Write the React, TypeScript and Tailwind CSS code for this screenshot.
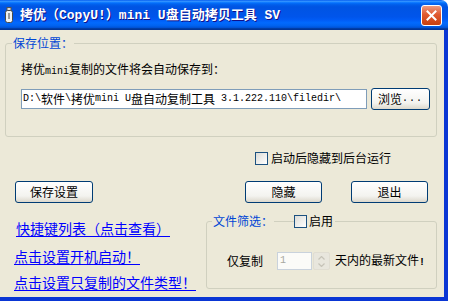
import type { ReactNode } from 'react'

const CJK = "font-['Noto_Sans_CJK_SC',sans-serif]"

// SimSun-like look: ascii runs in a narrow mono face, the rest in the CJK face
function Mixed({ text, latin }: { text: string; latin: string }) {
  const parts = text.split(/([\x20-\x7e]+)/).filter(Boolean)
  return (
    <>
      {parts.map((p, i) =>
        /^[\x20-\x7e]+$/.test(p) ? (
          <span key={i} className={latin}>{p}</span>
        ) : (
          <span key={i}>{p}</span>
        )
      )}
    </>
  )
}

function Check() {
  return (
    <span className="inline-block w-[13px] h-[13px] border border-[#1c5180] bg-[linear-gradient(135deg,#dcdcd7,#ffffff)] shrink-0" />
  )
}

function XpButton({ children, className }: { children: ReactNode; className?: string }) {
  return (
    <button className={`h-[22px] rounded-[3px] border border-[#003c74] bg-[linear-gradient(to_bottom,#ffffff,#f3f3ef_70%,#dcd8cc)] text-[12px] leading-[14px] text-black flex items-center justify-center ${className ?? ''}`}>
      {children}
    </button>
  )
}

function UsbIcon() {
  return (
    <svg width="8" height="16" viewBox="0 0 8 16">
      <rect x="2" y="0.5" width="4" height="3" fill="#d8d8d8" stroke="#555" strokeWidth="1" />
      <rect x="0.5" y="3.5" width="7" height="12" rx="2" fill="#f2f2f2" stroke="#4a4a4a" strokeWidth="1" />
      <rect x="3" y="6" width="2" height="6" fill="#9a9a9a" />
    </svg>
  )
}

export default function App() {
  return (
    <div className={`w-[461px] h-[308px] bg-white ${CJK}`}>
      <div className="w-[448px] h-[301px] flex flex-col">
        {/* title bar */}
        <div className="h-[30px] shrink-0 flex items-center rounded-tr-[7px] bg-[linear-gradient(to_bottom,#0058ee_0%,#3593ff_4%,#288eff_6%,#127dff_8%,#036ffc_10%,#0262ee_14%,#0057e5_20%,#0054e3_24%,#0055eb_56%,#005bf5_66%,#026afe_76%,#0062ef_86%,#0052d6_92%,#0040ab_94%,#003092_100%)] pl-[5px] pr-[6px]">
          <UsbIcon />
          <span className="ml-[7px] text-white font-bold text-[13px] leading-[16px] whitespace-pre [text-shadow:1px_1px_#0f1089]">
            <Mixed text="拷优（CopyU!）mini U盘自动拷贝工具 SV" latin="font-['Liberation_Mono'] text-[13px]" />
          </span>
          <div className="ml-auto w-[21px] h-[21px] rounded-[3px] border border-white bg-[linear-gradient(to_bottom,#ec9a80,#e0592f_45%,#c8400f)] flex items-center justify-center">
            <svg width="11" height="11" viewBox="0 0 11 11">
              <path d="M1.5 1.5 L9.5 9.5 M9.5 1.5 L1.5 9.5" stroke="white" strokeWidth="2" strokeLinecap="square" />
            </svg>
          </div>
        </div>

        {/* body */}
        <div className="flex-1 bg-[#ece9d8] border-r-4 border-b-4 border-[#0a36d4] pt-[6px] text-[12px] leading-[14px] text-black">
          <fieldset className="ml-[5px] w-[432px] h-[101px] border border-[#d0d0bf] rounded-[3px] pl-[6px]">
            <legend className="px-[1px] text-[#0046d5]">保存位置：</legend>
            <div className="pl-[9px]">
              <div className="mt-[12px] whitespace-pre">
                <Mixed text="拷优mini复制的文件将会自动保存到：" latin="font-['Liberation_Mono'] text-[10px]" />
              </div>
              <div className="mt-[9px] flex items-center gap-[4px]">
                <div className="w-[346px] h-[20px] border border-[#7f9db9] bg-white pl-[1px] flex items-center whitespace-pre overflow-hidden">
                  <Mixed text="D:\软件\拷优mini U盘自动复制工具 3.1.222.110\filedir\" latin="font-['Liberation_Mono'] text-[10px]" />
                </div>
                <XpButton className="w-[59px] h-[21px]">
                  <Mixed text="浏览..." latin="font-['Liberation_Mono'] text-[10px] tracking-[1px]" />
                </XpButton>
              </div>
            </div>
          </fieldset>

          <div className="mt-[14px] ml-[255px] flex items-center gap-[3px]">
            <Check />
            <span>启动后隐藏到后台运行</span>
          </div>

          <div className="mt-[16px] flex">
            <XpButton className="ml-[15px] w-[78px]">保存设置</XpButton>
            <XpButton className="ml-[152px] w-[77px]">隐藏</XpButton>
            <XpButton className="ml-[29px] w-[77px]">退出</XpButton>
          </div>

          <div className="mt-[11px] flex">
            <div className="w-[206px] pl-[14px] pt-[6px] flex flex-col items-start text-[14px] leading-[16px] text-[#0000ff]">
              <span className="ml-[2px] underline underline-offset-2">快捷键列表（点击查看）</span>
              <span className="mt-[12px] underline underline-offset-2">点击设置开机启动！</span>
              <span className="mt-[10px] underline underline-offset-2">点击设置只复制的文件类型！</span>
            </div>
            <fieldset className="w-[231px] h-[75px] border border-[#d0d0bf] rounded-[3px] pl-[5px]">
              <legend className="flex items-center">
                <span className="px-[1px] text-[#0046d5]">文件筛选：</span>
                <span className="w-[20px] h-[1px] bg-[#d0d0bf]" />
                <Check />
                <span className="ml-[2px] pr-[2px] bg-[#ece9d8]">启用</span>
              </legend>
              <div className="pl-[15px] mt-[24px] flex items-center">
                <span>仅复制</span>
                <div className="ml-[14px] w-[35px] h-[18px] border border-[#c9d2dc] bg-[#fbfbf8] pl-[2px] flex items-center text-[#a8a8a0] font-['Liberation_Mono'] text-[10px]">
                  1
                </div>
                <div className="ml-[1px] w-[17px] h-[18px] rounded-[2px] bg-[#e8e6dd] border border-[#e0ddd2] flex flex-col items-center justify-center gap-[3px]">
                  <svg width="7" height="4" viewBox="0 0 7 4"><path d="M0.5 3.5 L3.5 0.5 L6.5 3.5" stroke="#c6c3b8" fill="none" strokeWidth="1.2" /></svg>
                  <svg width="7" height="4" viewBox="0 0 7 4"><path d="M0.5 0.5 L3.5 3.5 L6.5 0.5" stroke="#c6c3b8" fill="none" strokeWidth="1.2" /></svg>
                </div>
                <span className="ml-[5px] whitespace-pre">
                  <Mixed text="天内的最新文件!" latin="font-['Liberation_Mono'] text-[10px] font-bold" />
                </span>
              </div>
            </fieldset>
          </div>
        </div>
      </div>
    </div>
  )
}
